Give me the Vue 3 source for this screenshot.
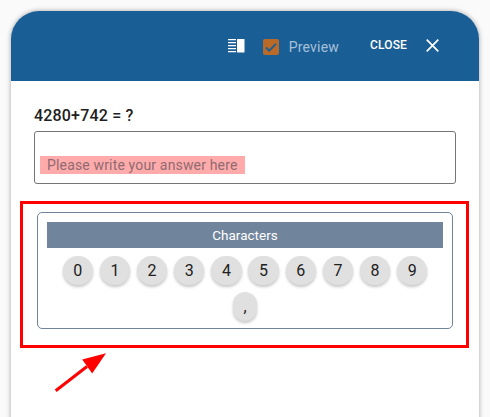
<template>
  <div class="page">
    <div class="dialog">
      <div class="dialog-header">
        <svg class="layout-icon" width="17" height="14" viewBox="0 0 17 14">
          <path d="M0 .7h8M0 3.700h8M0 6.700h8M0 9.700h8M0 12.700h8" stroke="#fff" stroke-width="1.300" fill="none" />
          <rect x="9" y="0" width="7.500" height="13.400" rx="0.500" fill="#fff" />
        </svg>
        <span class="check">
          <svg width="16" height="16" viewBox="0 0 16 16">
            <path d="M3 8.500l3.200 3.200L13 4.800" stroke="#1a5e96" stroke-width="1.800" fill="none" />
          </svg>
        </span>
        <span class="preview">Preview</span>
        <span class="close">CLOSE</span>
        <svg class="close-icon" width="13" height="13" viewBox="0 0 13 13">
          <path d="M.7.7l11.600 11.600M12.300.7L.7 12.300" stroke="#fff" stroke-width="1.700" fill="none" />
        </svg>
      </div>
      <div class="dialog-body">
        <div class="question">4280+742 = ?</div>
        <div class="answer">
          <span class="placeholder">Please write your answer here</span>
        </div>
        <div class="keyboard-wrap">
          <div class="keyboard">
            <div class="keyboard-title">Characters</div>
            <div class="keys">
              <button v-for="key in keys" :key="key" class="key">{{ key }}</button>
            </div>
          </div>
        </div>
        <svg class="arrow" width="60" height="50" viewBox="0 0 60 50">
          <path d="M1.700 40.700L33 16.500" stroke="#f00" stroke-width="3" fill="none" />
          <path d="M52 3.300L38.200 23.500 28.200 9.500z" fill="#f00" />
        </svg>
      </div>
    </div>
  </div>
</template>

<script setup>
const keys = ['0', '1', '2', '3', '4', '5', '6', '7', '8', '9', ',']
</script>

<style>
html,
body {
  margin: 0;
  background: #fafafa;
}
</style>

<style scoped>
.page {
  width: 490px;
  height: 417px;
  padding: 11px 11px 0;
  box-sizing: border-box;
  overflow: hidden;
  font-family: Roboto, "Liberation Sans", sans-serif;
}

.dialog {
  height: 430px;
  background: #fff;
  border-radius: 28px 28px 0 0;
  box-shadow: 0 0 5px rgba(0, 0, 0, 0.35);
}

.dialog-header {
  height: 70px;
  display: flex;
  align-items: center;
  padding: 0 40px 0 0;
  justify-content: flex-end;
  background: #1a5e96;
  border-radius: 28px 28px 0 0;
  box-sizing: border-box;
  color: #fff;
}

.layout-icon {
  margin-right: 18px;
  margin-top: -1px;
}

.check {
  width: 16px;
  height: 16px;
  margin-right: 10px;
  margin-top: 2px;
  background: #b96a28;
  border-radius: 2px;
  display: flex;
}

.preview {
  font-size: 14px;
  letter-spacing: 0.2px;
  color: #a6c1d8;
  margin-right: 31px;
  margin-top: 2px;
}

.close {
  font-size: 12px;
  font-weight: 500;
  letter-spacing: 0.15px;
  margin-right: 19px;
  margin-top: -2px;
}

.close-icon {
  margin-top: -2px;
}

.dialog-body {
  position: relative;
  padding: 25px 23px 0;
}

.question {
  font-size: 16px;
  font-weight: 500;
  line-height: 20px;
  letter-spacing: 0.18px;
  color: #212121;
  margin-bottom: 5px;
}

.answer {
  height: 53px;
  box-sizing: border-box;
  border: 1px solid #757575;
  border-radius: 3px;
  padding: 24px 5px 0;
}

.placeholder {
  display: block;
  width: 205px;
  height: 18px;
  box-sizing: border-box;
  padding-left: 7px;
  font-size: 14px;
  line-height: 19px;
  letter-spacing: 0.16px;
  color: #8f6a70;
  background: #ffabab;
}

.keyboard-wrap {
  margin: 17px -13px 0 -14px;
  padding: 8px 13px 15px 14px;
  border: 3px solid #f00;
  height: 147px;
  box-sizing: border-box;
}

.keyboard {
  height: 117px;
  box-sizing: border-box;
  border: 1px solid #70849c;
  border-radius: 5px;
  padding: 9px;
}

.keyboard-title {
  height: 26px;
  line-height: 26px;
  text-align: center;
  font-size: 13.500px;
  color: #fff;
  background: #70849c;
}

.keys {
  display: flex;
  flex-wrap: wrap;
  justify-content: center;
  margin-top: 8px;
  row-gap: 7px;
}

.key {
  height: 29px;
  margin: 0 3.400px;
  padding: 0 10.700px;
  border: none;
  border-radius: 15px;
  background: #e0e0e0;
  box-shadow: 0 2px 3px rgba(0, 0, 0, 0.22);
  font-family: inherit;
  font-size: 16px;
  color: #212121;
}

.arrow {
  position: absolute;
  left: 43px;
  top: 269px;
}
</style>
